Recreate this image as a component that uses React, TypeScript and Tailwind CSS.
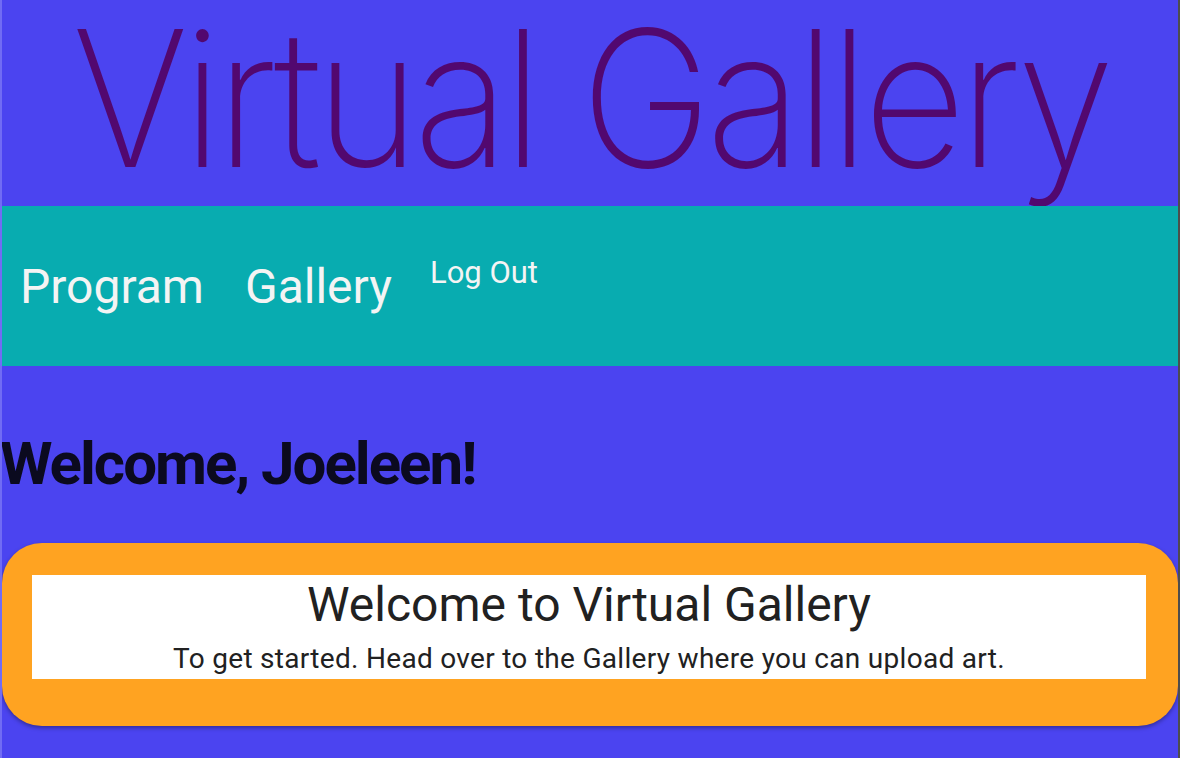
export default function App() {
  return (
    <div className="w-[1180px] h-[758px] overflow-hidden bg-[#4b44f0] border-l-2 border-l-[#716cf4] border-r-2 border-r-[#4d4d4d] font-['Roboto',sans-serif]">
      <header className="h-[206px] flex items-start justify-center">
        <h1 className="mt-[-2px] text-[190px] leading-[200px] font-['Inter',sans-serif] font-[230] tracking-[-6.5px] scale-x-[0.935] text-[#52086f] whitespace-nowrap">
          Virtual Gallery
        </h1>
      </header>
      <nav className="relative h-[160px] bg-[#08acb0] flex items-start pl-[18px] pt-[53px] text-[#f4f4f4]">
        <a className="text-[48px] leading-[56px] mr-[41px]">Program</a>
        <a className="text-[48px] leading-[56px] mr-[38px]">Gallery</a>
        <a className="text-[31px] leading-[36px] mt-[-4px]">Log Out</a>
      </nav>
      <h2 className="mt-[63px] -ml-[2px] text-[60px] leading-[70px] font-bold tracking-[-2px] text-[#0b0a1f]">
        Welcome, Joeleen!
      </h2>
      <section className="mt-[44px] rounded-[40px] bg-[#ffa321] pt-[32px] pb-[47px] pl-[30px] pr-[32px] shadow-[0_2px_4px_rgba(0,0,0,0.35)]">
        <div className="bg-white h-[104px] flex flex-col items-center text-[#212121]">
          <div className="text-[48px] leading-[56px] mt-[2px]">Welcome to Virtual Gallery</div>
          <div className="text-[28px] leading-[33px] mt-[9px] tracking-[0.3px]">To get started. Head over to the Gallery where you can upload art.</div>
        </div>
      </section>
    </div>
  );
}
